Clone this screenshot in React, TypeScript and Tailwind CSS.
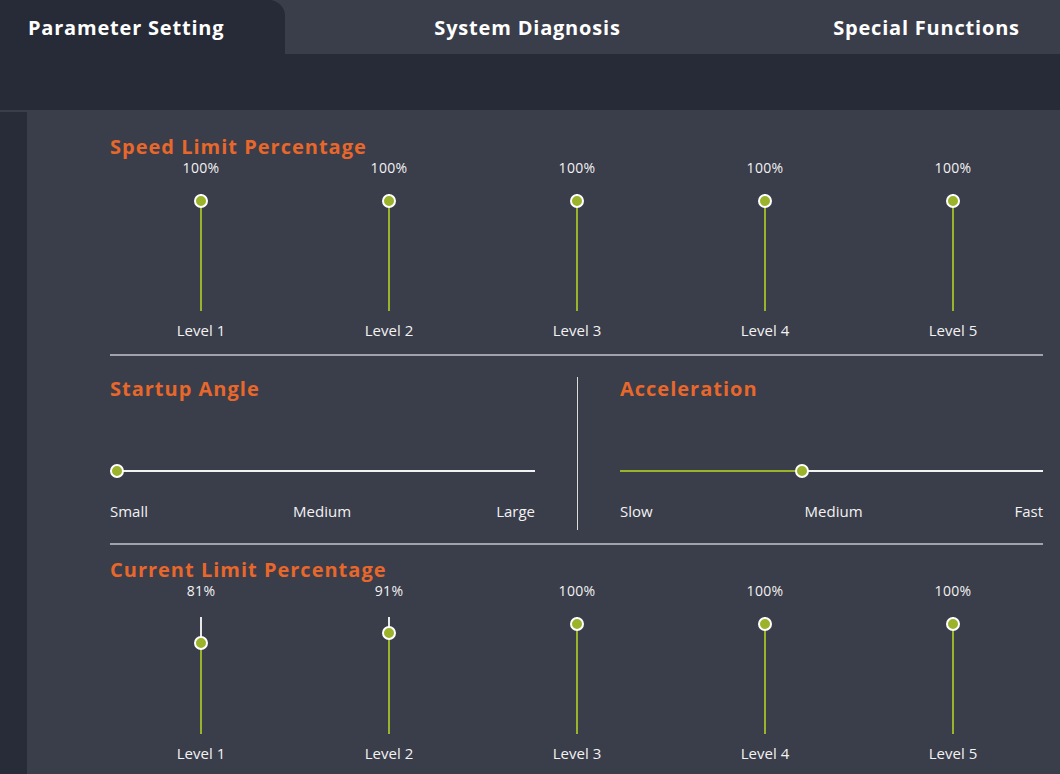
import React from "react";

const GREEN = "bg-[#9bb32b]";

function VerticalSlider({ value, label }: { value: number; label: string }) {
  const center = 7 + (100 - value);
  return (
    <div className="flex flex-col items-center">
      <div className="h-[18px] leading-[18px] text-[14px] tracking-[0.3px] text-[#f2f2f2]">{value}%</div>
      <div className="relative mt-[17px] h-[117px] w-[14px]">
        <div className="absolute left-[6px] top-0 w-[2px] bg-[#e8e8e8]" style={{ height: center }} />
        <div className={`absolute left-[6px] bottom-0 w-[2px] ${GREEN}`} style={{ top: center }} />
        <div
          className="absolute left-0 h-[14px] w-[14px] rounded-full border-2 border-white bg-[#9bb32b]"
          style={{ top: center - 7 }}
        />
      </div>
      <div className="mt-[10px] h-[18px] leading-[18px] text-[15px] text-[#f2f2f2]">{label}</div>
    </div>
  );
}

function LevelGroup({ title, values }: { title: string; values: number[] }) {
  return (
    <>
      <div className="h-[24px] whitespace-nowrap leading-[24px] text-[20px] font-bold tracking-[1px] text-[#e8672a]">
        {title}
      </div>
      <div className="ml-[-3px] grid w-[940px] grid-cols-5">
        {values.map((v, i) => (
          <VerticalSlider key={i} value={v} label={`Level ${i + 1}`} />
        ))}
      </div>
    </>
  );
}

function HorizontalSlider({
  title,
  thumb,
  labels,
}: {
  title: string;
  thumb: number;
  labels: [string, string, string];
}) {
  return (
    <div className="flex flex-1 flex-col">
      <div className="h-[24px] whitespace-nowrap leading-[24px] text-[20px] font-bold tracking-[1px] text-[#e8672a]">
        {title}
      </div>
      <div className="relative mt-[63px] h-[14px]">
        <div className={`absolute left-0 top-[6px] h-[2px] ${GREEN}`} style={{ width: thumb + 7 }} />
        <div className="absolute right-0 top-[6px] h-[2px] bg-[#f2f2f2]" style={{ left: thumb + 7 }} />
        <div
          className="absolute top-0 h-[14px] w-[14px] rounded-full border-2 border-white bg-[#9bb32b]"
          style={{ left: thumb }}
        />
      </div>
      <div className="mt-[24px] flex h-[18px] justify-between leading-[18px] text-[15px] text-[#f2f2f2]">
        {labels.map((l) => (
          <span key={l}>{l}</span>
        ))}
      </div>
    </div>
  );
}

export default function App() {
  return (
    <div
      className="h-[774px] w-[1060px] overflow-hidden bg-[#3a3d4a] text-white"
      style={{ fontFamily: '"Open Sans", "Noto Sans", sans-serif' }}
    >
      {/* tab strip */}
      <div className="flex h-[54px] whitespace-nowrap text-[20px] font-bold leading-[54px] tracking-[0.8px] text-white">
        <div className="h-[54px] w-[285px] rounded-tr-[16px] bg-[#272b37] pl-[28px] pt-[1px]">Parameter Setting</div>
        <div className="w-[147px]" />
        <div className="w-[191px] pt-[1px] text-center">System Diagnosis</div>
        <div className="w-[209px]" />
        <div className="w-[189px] pt-[1px] text-center">Special Functions</div>
      </div>
      <div className="h-[56px] bg-[#272b37]" />

      <div className="flex h-[664px] pt-[2px]">
        <div className="w-[27px] bg-[#282c38]" />
        <div className="flex w-[1016px] flex-col pl-[83px]">
          <div className="mt-[23px]" />
          <LevelGroup title="Speed Limit Percentage" values={[100, 100, 100, 100, 100]} />
          <div className="mt-[15px] h-[2px] w-[933px] bg-[#a2a3aa]" />

          <div className="mt-[21px] flex h-[153px] w-[933px]">
            <div className="flex w-[425px]">
              <HorizontalSlider title="Startup Angle" thumb={0} labels={["Small", "Medium", "Large"]} />
            </div>
            <div className="ml-[42px] w-[1px] bg-[#dcdcdc]" />
            <div className="ml-[42px] flex w-[423px]">
              <HorizontalSlider title="Acceleration" thumb={175} labels={["Slow", "Medium", "Fast"]} />
            </div>
          </div>

          <div className="mt-[13px] h-[2px] w-[933px] bg-[#a2a3aa]" />
          <div className="mt-[13px]">
            <LevelGroup title="Current Limit Percentage" values={[81, 91, 100, 100, 100]} />
          </div>
        </div>
      </div>
    </div>
  );
}
